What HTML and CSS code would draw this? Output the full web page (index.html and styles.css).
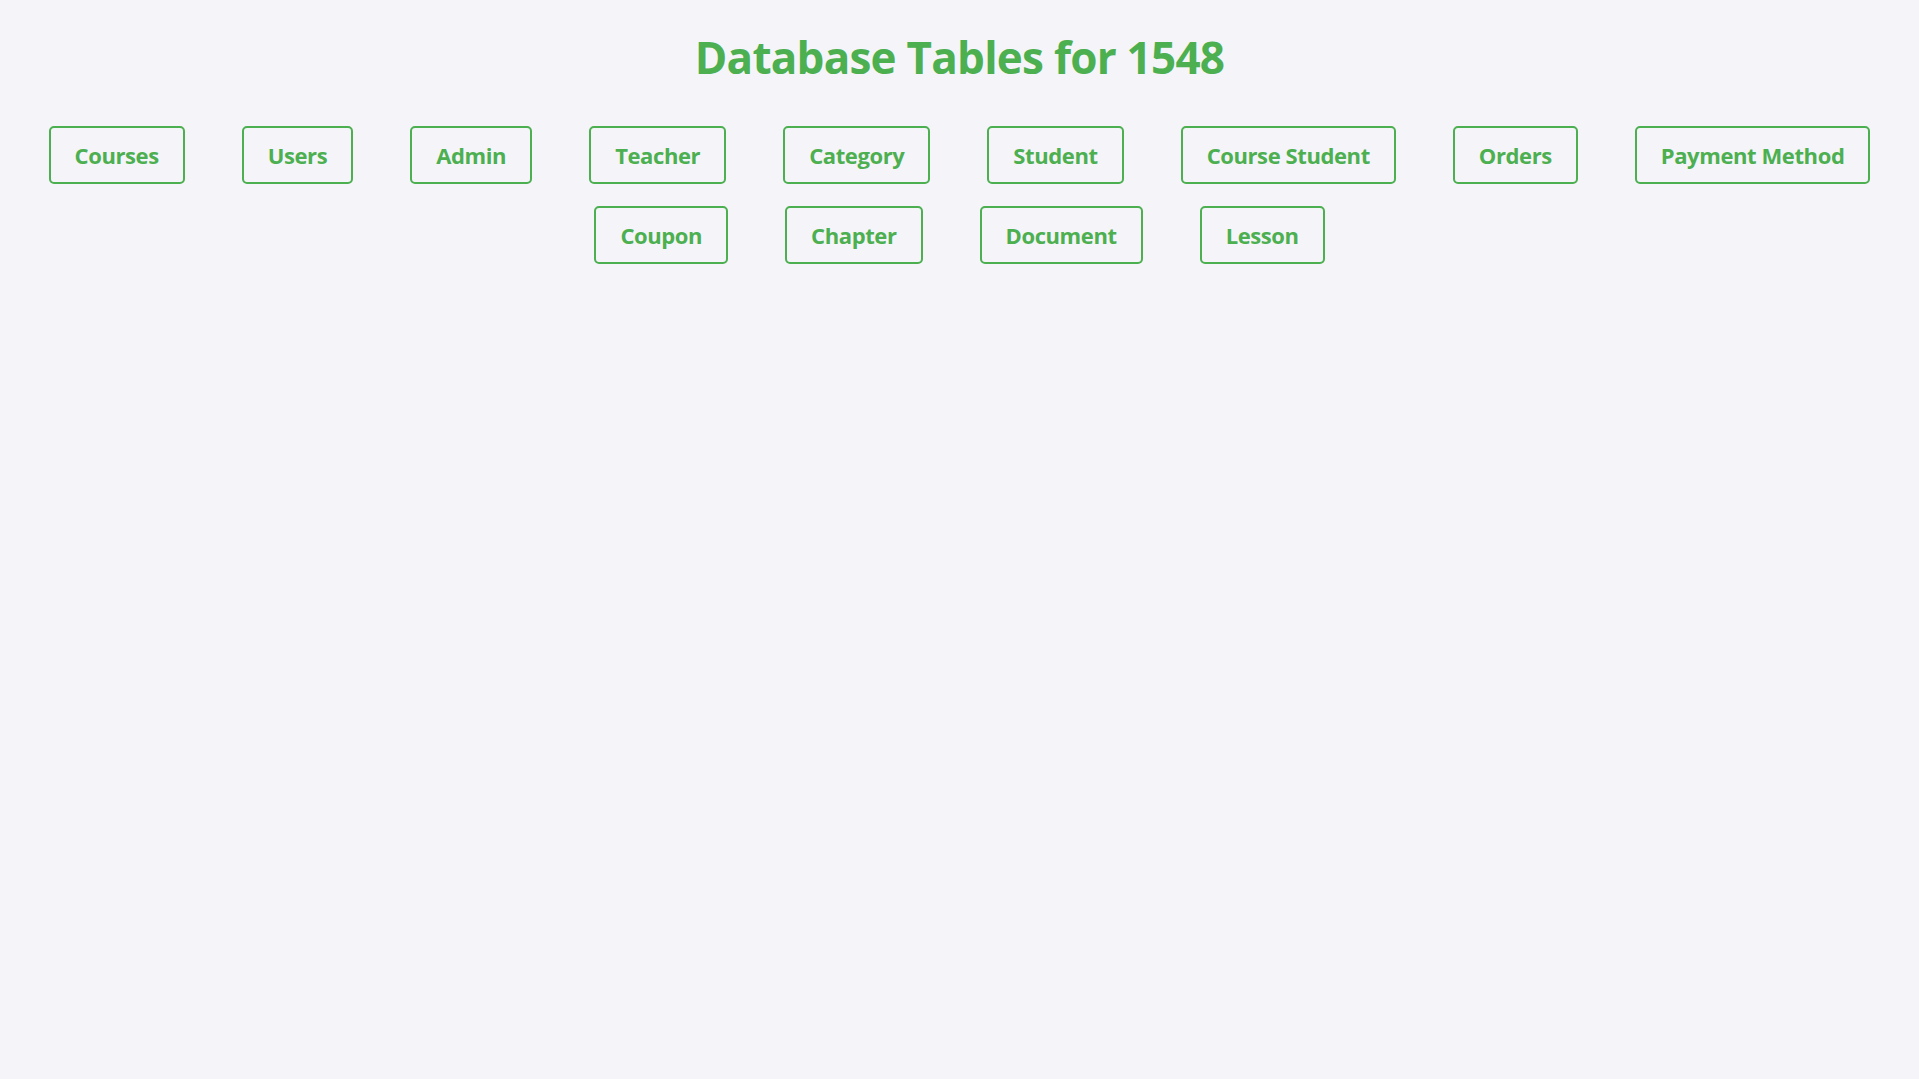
FILE: index.html
```html
<!DOCTYPE html>
<html lang="en">
<head>
<meta charset="utf-8">
<title>Database Tables for 1548</title>
<link rel="stylesheet" href="styles.css">
</head>
<body>
  <h1 class="page-title">Database Tables for 1548</h1>
  <nav class="table-list">
    <a class="table-btn" href="#">Courses</a>
    <a class="table-btn" href="#">Users</a>
    <a class="table-btn" href="#">Admin</a>
    <a class="table-btn" href="#">Teacher</a>
    <a class="table-btn" href="#">Category</a>
    <a class="table-btn" href="#">Student</a>
    <a class="table-btn" href="#">Course Student</a>
    <a class="table-btn" href="#">Orders</a>
    <a class="table-btn" href="#">Payment Method</a>
    <a class="table-btn" href="#">Coupon</a>
    <a class="table-btn" href="#">Chapter</a>
    <a class="table-btn" href="#">Document</a>
    <a class="table-btn" href="#">Lesson</a>
  </nav>
</body>
</html>
```
FILE: styles.css
```css
html, body {
  margin: 0;
  padding: 0;
}
body {
  background: #f4f4f9;
  font-family: "Open Sans", "Noto Sans", "Liberation Sans", sans-serif;
  min-height: 100vh;
}
.page-title {
  margin: 27px 0 39px;
  text-align: center;
  color: #4caf50;
  font-size: 44px;
  line-height: 60px;
  font-weight: 700;
  letter-spacing: -0.75px;
}
.table-list {
  display: flex;
  flex-wrap: wrap;
  justify-content: center;
  gap: 22px 57px;
  padding: 0 20px;
}
.table-btn {
  display: block;
  padding: 12px 24px 12px;
  border: 2px solid #4caf50;
  border-radius: 5px;
  color: #4caf50;
  text-decoration: none;
  font-size: 22px;
  line-height: 30px;
  font-weight: 700;
  letter-spacing: -0.4px;
}
```
